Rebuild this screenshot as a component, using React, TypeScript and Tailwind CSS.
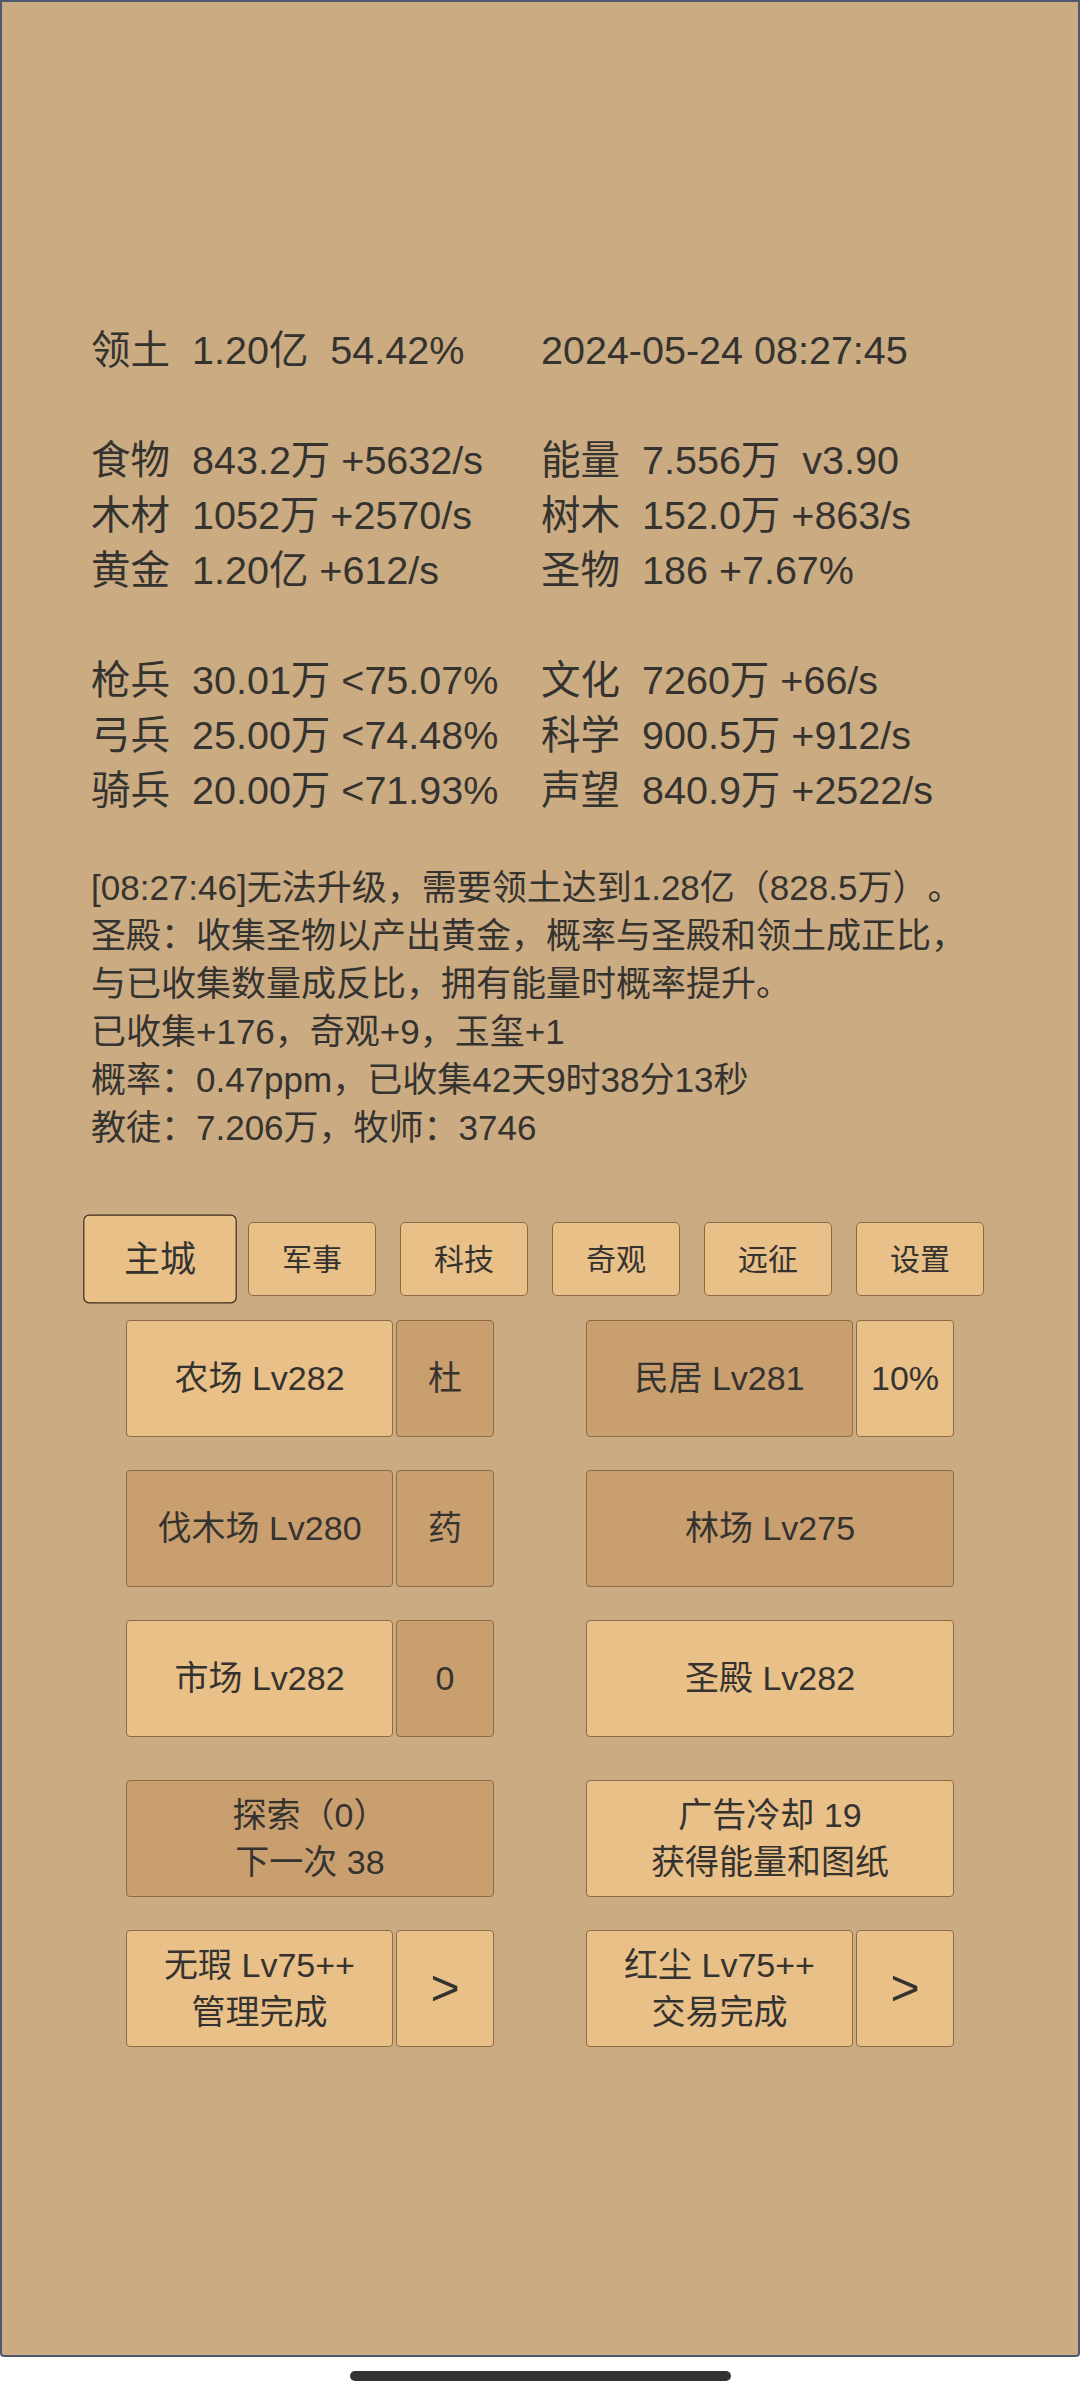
import * as React from "react";

type Stat = { label?: string; value: string };

const statRows: ([Stat, Stat] | null)[] = [
  [{ label: "领土", value: "1.20亿  54.42%" }, { value: "2024-05-24 08:27:45" }],
  null,
  [{ label: "食物", value: "843.2万 +5632/s" }, { label: "能量", value: "7.556万  v3.90" }],
  [{ label: "木材", value: "1052万 +2570/s" }, { label: "树木", value: "152.0万 +863/s" }],
  [{ label: "黄金", value: "1.20亿 +612/s" }, { label: "圣物", value: "186 +7.67%" }],
  null,
  [{ label: "枪兵", value: "30.01万 <75.07%" }, { label: "文化", value: "7260万 +66/s" }],
  [{ label: "弓兵", value: "25.00万 <74.48%" }, { label: "科学", value: "900.5万 +912/s" }],
  [{ label: "骑兵", value: "20.00万 <71.93%" }, { label: "声望", value: "840.9万 +2522/s" }],
];

const logLines = [
  "[08:27:46]无法升级，需要领土达到1.28亿（828.5万）。",
  "圣殿：收集圣物以产出黄金，概率与圣殿和领土成正比，",
  "与已收集数量成反比，拥有能量时概率提升。",
  "已收集+176，奇观+9，玉玺+1",
  "概率：0.47ppm，已收集42天9时38分13秒",
  "教徒：7.206万，牧师：3746",
];

const tabs = ["主城", "军事", "科技", "奇观", "远征", "设置"];

const light = "bg-[#e9c088]";
const dark = "bg-[#c99f6f]";

function StatCell({ stat }: { stat: Stat }) {
  return (
    <div className="flex w-[450px] whitespace-pre">
      {stat.label && <span className="w-[80px]">{stat.label}</span>}
      {stat.label && <span className="w-[21px]" />}
      <span>{stat.value}</span>
    </div>
  );
}

function Btn({
  className,
  children,
}: {
  className: string;
  children: React.ReactNode;
}) {
  return (
    <div
      className={
        "flex h-[117px] flex-col items-center justify-center rounded-[4px] border border-[#8c6c46] text-center leading-[47px] " +
        className
      }
    >
      {children}
    </div>
  );
}

function Group({ children }: { children: React.ReactNode }) {
  return <div className="flex w-[368px] gap-[3px]">{children}</div>;
}

export default function App() {
  return (
    <div className="h-[2400px] w-[1080px] bg-white font-['Liberation_Sans','Noto_Sans_CJK_SC',sans-serif] text-[#353330] [text-spacing-trim:space-all]">
      <div className="h-[2357px] rounded-b-[4px] border-2 border-[#4d5a70] bg-[#cbab82] pt-[321px]">
        {/* stats */}
        <div className="pl-[89px] text-[39.5px] leading-[55px]">
          {statRows.map((row, i) =>
            row ? (
              <div key={i} className="flex">
                <StatCell stat={row[0]} />
                <StatCell stat={row[1]} />
              </div>
            ) : (
              <div key={i} className="h-[55px]" />
            )
          )}
        </div>

        {/* log */}
        <div className="mt-[46px] pl-[89px] text-[35px] leading-[48px]">
          {logLines.map((l) => (
            <div key={l} className="whitespace-nowrap">
              {l}
            </div>
          ))}
        </div>

        {/* tabs */}
        <div className="mt-[70px] flex justify-center gap-[24px] text-[30px]">
          {tabs.map((t, i) => (
            <div
              key={t}
              className={
                "flex h-[74px] w-[128px] items-center justify-center rounded-[5px] border bg-[#e9c088] " +
                (i === 0 ? "scale-[1.2] border-[#3e2f1d]" : "border-[#8c6c46]")
              }
            >
              {t}
            </div>
          ))}
        </div>

        {/* buildings */}
        <div className="mt-[24px] flex flex-col items-center text-[34px]">
          <div className="flex gap-[92px]">
            <Group>
              <Btn className={"w-[267px] " + light}>农场 Lv282</Btn>
              <Btn className={"w-[98px] " + dark}>杜</Btn>
            </Group>
            <Group>
              <Btn className={"w-[267px] " + dark}>民居 Lv281</Btn>
              <Btn className={"w-[98px] " + light}>10%</Btn>
            </Group>
          </div>
          <div className="mt-[33px] flex gap-[92px]">
            <Group>
              <Btn className={"w-[267px] " + dark}>伐木场 Lv280</Btn>
              <Btn className={"w-[98px] " + dark}>药</Btn>
            </Group>
            <Group>
              <Btn className={"w-[368px] " + dark}>林场 Lv275</Btn>
            </Group>
          </div>
          <div className="mt-[33px] flex gap-[92px]">
            <Group>
              <Btn className={"w-[267px] " + light}>市场 Lv282</Btn>
              <Btn className={"w-[98px] " + dark}>0</Btn>
            </Group>
            <Group>
              <Btn className={"w-[368px] " + light}>圣殿 Lv282</Btn>
            </Group>
          </div>
          <div className="mt-[43px] flex gap-[92px]">
            <Group>
              <Btn className={"w-[368px] " + dark}>
                <span>探索（0）</span>
                <span>下一次 38</span>
              </Btn>
            </Group>
            <Group>
              <Btn className={"w-[368px] " + light}>
                <span>广告冷却 19</span>
                <span>获得能量和图纸</span>
              </Btn>
            </Group>
          </div>
          <div className="mt-[33px] flex gap-[92px]">
            <Group>
              <Btn className={"w-[267px] " + light}>
                <span>无瑕 Lv75++</span>
                <span>管理完成</span>
              </Btn>
              <Btn className={"w-[98px] text-[50px] " + light}>&gt;</Btn>
            </Group>
            <Group>
              <Btn className={"w-[267px] " + light}>
                <span>红尘 Lv75++</span>
                <span>交易完成</span>
              </Btn>
              <Btn className={"w-[98px] text-[50px] " + light}>&gt;</Btn>
            </Group>
          </div>
        </div>
      </div>

      {/* home indicator */}
      <div className="flex justify-center pt-[14px]">
        <div className="h-[10px] w-[381px] rounded-full bg-[#333333]" />
      </div>
    </div>
  );
}
